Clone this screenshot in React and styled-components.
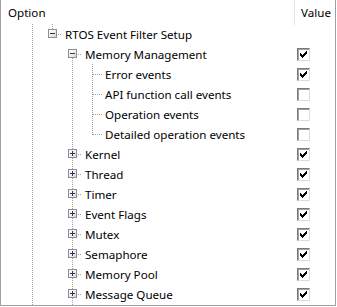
import React from 'react'
import styled, { createGlobalStyle } from 'styled-components'

const GlobalStyle = createGlobalStyle`
  html, body {
    margin: 0;
    padding: 0;
    background: #fff;
  }
  body {
    font-family: "Noto Sans", "Open Sans", sans-serif;
    font-size: 11.6px;
    color: #000;
  }
`

const LINE = '#a0a0a0'
const vDots = `repeating-linear-gradient(to bottom, ${LINE} 0 1px, transparent 1px 2px)`
const hDots = `repeating-linear-gradient(to right, ${LINE} 0 1px, transparent 1px 2px)`

const Panel = styled.div`
  width: 336px;
  height: 306px;
  box-sizing: border-box;
  border: 1px solid #a0a0a0;
  border-top: none;
  overflow: hidden;
  background: #fff;
`

const Header = styled.div`
  display: grid;
  grid-template-columns: 293px 1fr;
  height: 24px;
  .col {
    padding: 1px 0 0 7px;
    line-height: 24px;
  }
  .value {
    border-left: 1px solid #e3e3e3;
    padding: 1px 0 0 6px;
    height: 25px;
    box-sizing: border-box;
    line-height: 24px;
  }
`

const Row = styled.div`
  display: grid;
  grid-template-columns: 293px 1fr;
  height: 20px;
`

const TreeCell = styled.div`
  display: flex;
  align-items: stretch;
  padding-left: 21px;
  white-space: nowrap;
`

const Guide = styled.div`
  position: relative;
  width: 20px;
  flex: none;
  /* vertical dotted line, full / top half / bottom half */
  &::before {
    content: '';
    position: absolute;
    left: 10px;
    width: 1px;
    top: ${p => (p.$up ? '0' : p.$down ? '10px' : '0')};
    bottom: ${p => (p.$down ? '0' : p.$up ? '10px' : '0')};
    background: ${p => (p.$up || p.$down ? vDots : 'none')};
  }
  /* horizontal connector to the label */
  &::after {
    content: '';
    position: absolute;
    top: 10px;
    left: ${p => (p.$box ? '16px' : '11px')};
    right: 0;
    height: 1px;
    background: ${p => (p.$branch ? hDots : 'none')};
  }
`

const Expander = styled.span`
  position: absolute;
  left: 6px;
  top: 5px;
  width: 9px;
  height: 9px;
  box-sizing: border-box;
  border: 1px solid #8e8f8f;
  background: linear-gradient(135deg, #ffffff 0%, #f0f0f0 50%, #d6d6d6 100%);
  z-index: 1;
  &::before, &::after {
    content: '';
    position: absolute;
    background: #23375f;
  }
  &::before {
    left: 1px;
    top: 3px;
    width: 5px;
    height: 1px;
  }
  &::after {
    display: ${p => (p.$open ? 'none' : 'block')};
    left: 3px;
    top: 1px;
    width: 1px;
    height: 5px;
  }
`

const Label = styled.span`
  padding: 1px 0 0 3px;
  line-height: 20px;
  color: #000;
`

const ValueCell = styled.div`
  display: flex;
  align-items: center;
  padding-left: 3px;
`

const Box = styled.span`
  position: relative;
  width: 13px;
  height: 13px;
  box-sizing: border-box;
  border: 1px solid;
  border-color: #7a7a7a #dcdcdc #dcdcdc #7a7a7a;
  box-shadow: inset 1px 1px 0 #a0a0a0;
  background: #fff;
  svg {
    position: absolute;
    left: 2px;
    top: 2px;
  }
`

const Check = () => (
  <svg width="7" height="7" viewBox="0 0 7 7" shapeRendering="crispEdges">
    <rect x="0" y="2" width="1" height="3" fill="#000" />
    <rect x="1" y="3" width="1" height="3" fill="#000" />
    <rect x="2" y="4" width="1" height="3" fill="#000" />
    <rect x="3" y="3" width="1" height="3" fill="#000" />
    <rect x="4" y="2" width="1" height="3" fill="#000" />
    <rect x="5" y="1" width="1" height="3" fill="#000" />
    <rect x="6" y="0" width="1" height="3" fill="#000" />
  </svg>
)

const CheckBox = ({ checked }) => <Box>{checked && <Check />}</Box>

// guides: per indent column -> { up, down, box, open, branch }
const rows = [
  {
    label: 'RTOS Event Filter Setup',
    guides: [{ up: 1, down: 1 }, { up: 1, box: 1, open: 1, branch: 1 }],
  },
  {
    label: 'Memory Management',
    value: true,
    guides: [{ up: 1, down: 1 }, {}, { down: 1, box: 1, open: 1, branch: 1 }],
  },
  { label: 'Error events', value: true, child: true },
  { label: 'API function call events', value: false, child: true },
  { label: 'Operation events', value: false, child: true },
  { label: 'Detailed operation events', value: false, child: true, last: true },
  'Kernel',
  'Thread',
  'Timer',
  'Event Flags',
  'Mutex',
  'Semaphore',
  'Memory Pool',
  'Message Queue',
].map(r => {
  if (typeof r === 'string') {
    return {
      label: r,
      value: true,
      guides: [{ up: 1, down: 1 }, {}, { up: 1, down: 1, box: 1, branch: 1 }],
    }
  }
  if (r.child) {
    return {
      ...r,
      guides: [
        { up: 1, down: 1 },
        {},
        { up: 1, down: 1 },
        { up: 1, down: r.last ? 0 : 1, branch: 1 },
      ],
    }
  }
  return r
})

const App = () => (
  <>
    <GlobalStyle />
    <Panel>
      <Header>
        <div className="col">Option</div>
        <div className="value">Value</div>
      </Header>
      {rows.map(row => (
        <Row key={row.label}>
          <TreeCell>
            {row.guides.map((g, i) => (
              <Guide
                key={i}
                $up={!!g.up}
                $down={!!g.down}
                $box={!!g.box}
                $branch={!!g.branch}
              >
                {g.box && <Expander $open={!!g.open} />}
              </Guide>
            ))}
            <Label>{row.label}</Label>
          </TreeCell>
          <ValueCell>
            {row.value !== undefined && <CheckBox checked={row.value} />}
          </ValueCell>
        </Row>
      ))}
    </Panel>
  </>
)

export default App
